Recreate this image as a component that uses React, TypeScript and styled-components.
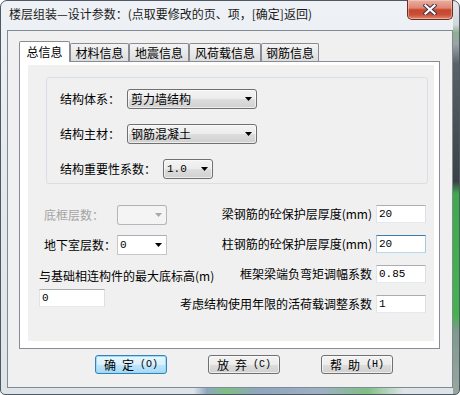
import React from "react";
import styled, { createGlobalStyle } from "styled-components";

const CJK = `"Noto Sans CJK SC", "Noto Sans", sans-serif`;
const MONO = `"Liberation Mono", "DejaVu Sans Mono", monospace`;

const GlobalStyle = createGlobalStyle`
  html, body { margin: 0; padding: 0; background: #ffffff; }
  body { width: 460px; height: 395px; overflow: hidden; font-family: ${CJK}; }
  #root { width: 460px; height: 395px; }
  *, *::before, *::after { box-sizing: border-box; }
`;

const Window = styled.div`
  width: 460px;
  height: 395px;
  display: flex;
  flex-direction: column;
  padding: 0 6px 6px;
  border: 1px solid #4f5963;
  border-radius: 7px 7px 5px 5px;
  background:
    linear-gradient(
        to bottom,
        #e4e8ec 0%,
        #d0d6da 6%,
        #8fb090 8%,
        #9ba3a6 11%,
        #5a6166 16%,
        #3b4246 46%,
        #3faa4c 49%,
        #46b24f 80%,
        #7f9a8c 84%,
        #9aa6a0 100%
      )
      right top / 6px 100% no-repeat,
    linear-gradient(
        to right,
        rgba(0, 0, 0, 0) 42%,
        #8fa6be 45%,
        #7fbf84 49%,
        #8fa6be 56%,
        #9fb0c2 70%,
        #7fbf84 80%,
        rgba(0, 0, 0, 0) 88%
      )
      left bottom / 100% 6px no-repeat,
    linear-gradient(to bottom, #eef2f6 0%, #e5eaef 40%, #dfe4e9 100%);
`;

const TitleBar = styled.div`
  height: 29px;
  flex-shrink: 0;
  display: flex;
  align-items: flex-start;
`;

const TitleText = styled.div`
  padding: 5px 0 0 2px;
  font: 12px/16px ${CJK};
  color: #1a1a1a;
  white-space: nowrap;
`;

const CloseButton = styled.div`
  margin: -1px 0 0 auto;
  width: 46px;
  height: 20px;
  border: 1px solid #6a2e22;
  border-top: none;
  border-radius: 0 0 5px 5px;
  background: linear-gradient(#eab0a2 0%, #df8672 42%, #c8452c 52%, #c9503a 78%, #e0896f 100%);
  box-shadow: inset 0 0 0 1px rgba(255, 220, 210, 0.45);
  display: flex;
  align-items: center;
  justify-content: center;
`;

const Client = styled.div`
  flex: 1;
  display: flex;
  flex-direction: column;
  border: 1px solid #7f8a95;
  background: #f0f0f0;
  padding: 10px 12px 13px 11px;
`;

const TabStrip = styled.div`
  height: 20px;
  flex-shrink: 0;
  display: flex;
  align-items: flex-end;
`;

const Tab = styled.div<{ $active?: boolean; $w: number }>`
  position: relative;
  z-index: ${(p) => (p.$active ? 1 : 0)};
  width: ${(p) => p.$w}px;
  height: ${(p) => (p.$active ? 21 : 18)}px;
  margin-bottom: ${(p) => (p.$active ? -1 : 0)}px;
  border: 1px solid #898c95;
  border-bottom: none;
  border-radius: 2px 2px 0 0;
  background: ${(p) =>
    p.$active ? "#ffffff" : "linear-gradient(#f4f4f4 0%, #e9e9e9 50%, #dcdcdc 100%)"};
  display: flex;
  align-items: center;
  justify-content: center;
  font: 12px/16px ${CJK};
  color: #000;
  white-space: nowrap;
`;

const TabPanel = styled.div`
  height: 288px;
  flex-shrink: 0;
  display: flex;
  border: 1px solid #898c95;
  background: #ffffff;
  padding: 3px 5px 7px 8px;
`;

const Page = styled.div`
  flex: 1;
  display: flex;
  flex-direction: column;
  background: #f0f0f0;
  padding-top: 12px;
`;

const GroupBox = styled.div`
  margin: 0 6px 0 18px;
  border: 1px solid #d5dfe5;
  border-radius: 3px;
  padding: 11px 0 4px 13px;
  display: flex;
  flex-direction: column;
  gap: 15px;
`;

const FieldRow = styled.div`
  height: 20px;
  display: flex;
  align-items: center;
  gap: 7px;
`;

const Label = styled.span<{ $disabled?: boolean }>`
  font: 12px/16px ${CJK};
  color: ${(p) => (p.$disabled ? "#a3a3a3" : "#000")};
  white-space: nowrap;
`;

const ThemedCombo = styled.div<{ $w: number }>`
  width: ${(p) => p.$w}px;
  height: 20px;
  flex-shrink: 0;
  border: 1px solid #707070;
  border-radius: 3px;
  background: linear-gradient(#f3f3f3 0%, #ececec 50%, #dddddd 52%, #d0d0d0 100%);
  box-shadow: inset 0 0 0 1px rgba(255, 255, 255, 0.6);
  display: flex;
  align-items: center;
  justify-content: space-between;
  padding: 0 4px 0 3px;
`;

const PlainCombo = styled.div<{ $disabled?: boolean }>`
  width: 50px;
  height: 20px;
  flex-shrink: 0;
  border: 1px solid ${(p) => (p.$disabled ? "#b4b8bc" : "#c3c6cb")};
  border-top-color: ${(p) => (p.$disabled ? "#adb2b5" : "#abadb3")};
  border-radius: ${(p) => (p.$disabled ? 3 : 1)}px;
  background: ${(p) => (p.$disabled ? "#f4f4f4" : "#ffffff")};
  display: flex;
  align-items: center;
  justify-content: space-between;
  padding: 0 4px 0 2px;
`;

const ComboText = styled.span<{ $mono?: boolean }>`
  font: ${(p) => (p.$mono ? `11px/16px ${MONO}` : `12px/16px ${CJK}`)};
  color: #000;
  white-space: nowrap;
`;

const Lower = styled.div`
  margin: 21px 8px 0 11px;
  display: grid;
  grid-template-columns: minmax(0, 1fr) auto;
  grid-template-rows: repeat(4, 20px);
  row-gap: 10px;
`;

const LeftRow = styled.div<{ $row: number }>`
  grid-column: 1;
  grid-row: ${(p) => p.$row};
  display: flex;
  align-items: center;
`;

const LeftLabel = styled(Label)`
  width: 78px;
  padding-left: 5px;
`;

const LeftBlock = styled.div`
  grid-column: 1;
  grid-row: 3 / span 2;
  display: flex;
  flex-direction: column;
  align-items: flex-start;
  gap: 5px;
  padding-top: 3px;
`;

const RightRow = styled.div<{ $row: number }>`
  grid-column: 2;
  grid-row: ${(p) => p.$row};
  justify-self: end;
  align-self: start;
  height: 18px;
  display: flex;
  align-items: center;
  gap: 4px;
`;

const TextInput = styled.div<{ $w: number; $focused?: boolean }>`
  width: ${(p) => p.$w}px;
  height: 18px;
  flex-shrink: 0;
  background: #ffffff;
  border: 1px solid;
  border-color: ${(p) =>
    p.$focused ? "#3d7bad #a4c9e3 #b7d9ed #a4c9e3" : "#abadb3 #dbdfe6 #e3e9ef #e2e3ea"};
  padding-left: 2px;
  display: flex;
  align-items: center;
  font: 11px/16px ${MONO};
  color: #000;
`;

const ButtonRow = styled.div`
  margin-top: 6px;
  padding-left: 76px;
  display: flex;
  gap: 41px;
`;

const Button = styled.div<{ $default?: boolean }>`
  width: 72px;
  height: 19px;
  border: 1px solid ${(p) => (p.$default ? "#3c7fb1" : "#707070")};
  border-radius: 3px;
  background: ${(p) =>
    p.$default
      ? "linear-gradient(#eaf6fd 0%, #d9f0fc 50%, #bee6fd 52%, #a7d9f5 100%)"
      : "linear-gradient(#f3f3f3 0%, #ececec 50%, #dddddd 52%, #d0d0d0 100%)"};
  box-shadow: inset 0 0 0 1px ${(p) => (p.$default ? "rgba(140, 220, 255, 0.9)" : "rgba(255,255,255,0.6)")};
  display: flex;
  align-items: center;
  justify-content: center;
  gap: 6px;
  font: 12px/16px ${CJK};
  color: #000;
  white-space: nowrap;
`;

const Mnemonic = styled.span`
  font: 10px/16px ${MONO};
`;

const Arrow: React.FC<{ color?: string }> = ({ color = "#000" }) => (
  <svg width="7" height="4" viewBox="0 0 7 4">
    <polygon points="0,0 7,0 3.5,4" fill={color} />
  </svg>
);

const CloseX = () => (
  <svg width="14" height="11" viewBox="0 0 14 11">
    <path d="M2.5 1.5 L11.5 9.5 M11.5 1.5 L2.5 9.5" stroke="#3b3548" strokeWidth="4.2" strokeLinecap="square" />
    <path d="M2.5 1.5 L11.5 9.5 M11.5 1.5 L2.5 9.5" stroke="#ffffff" strokeWidth="2.2" strokeLinecap="square" />
  </svg>
);

const tabs = [
  { label: "总信息", w: 51, active: true },
  { label: "材料信息", w: 59 },
  { label: "地震信息", w: 60 },
  { label: "风荷载信息", w: 72 },
  { label: "钢筋信息", w: 58 },
];

const rightFields = [
  { label: "梁钢筋的砼保护层厚度(mm)", value: "20" },
  { label: "柱钢筋的砼保护层厚度(mm)", value: "20", focused: true },
  { label: "框架梁端负弯矩调幅系数", value: "0.85" },
  { label: "考虑结构使用年限的活荷载调整系数", value: "1" },
];

const buttons = [
  { a: "确", b: "定", m: "(O)", def: true },
  { a: "放", b: "弃", m: "(C)" },
  { a: "帮", b: "助", m: "(H)" },
];

export default function App() {
  return (
    <>
      <GlobalStyle />
      <Window>
        <TitleBar>
          <TitleText>楼层组装—设计参数：(点取要修改的页、项，[确定]返回)</TitleText>
          <CloseButton>
            <CloseX />
          </CloseButton>
        </TitleBar>
        <Client>
          <TabStrip>
            {tabs.map((t) => (
              <Tab key={t.label} $w={t.w} $active={t.active}>
                {t.label}
              </Tab>
            ))}
          </TabStrip>
          <TabPanel>
            <Page>
              <GroupBox>
                <FieldRow>
                  <Label>结构体系：</Label>
                  <ThemedCombo $w={130}>
                    <ComboText>剪力墙结构</ComboText>
                    <Arrow />
                  </ThemedCombo>
                </FieldRow>
                <FieldRow>
                  <Label>结构主材：</Label>
                  <ThemedCombo $w={130}>
                    <ComboText>钢筋混凝土</ComboText>
                    <Arrow />
                  </ThemedCombo>
                </FieldRow>
                <FieldRow>
                  <Label>结构重要性系数：</Label>
                  <ThemedCombo $w={50}>
                    <ComboText $mono>1.0</ComboText>
                    <Arrow />
                  </ThemedCombo>
                </FieldRow>
              </GroupBox>
              <Lower>
                <LeftRow $row={1}>
                  <LeftLabel $disabled>底框层数：</LeftLabel>
                  <PlainCombo $disabled>
                    <ComboText $mono />
                    <Arrow color="#a8a8a8" />
                  </PlainCombo>
                </LeftRow>
                <LeftRow $row={2}>
                  <LeftLabel>地下室层数：</LeftLabel>
                  <PlainCombo>
                    <ComboText $mono>0</ComboText>
                    <Arrow />
                  </PlainCombo>
                </LeftRow>
                <LeftBlock>
                  <Label>与基础相连构件的最大底标高(m)</Label>
                  <TextInput $w={66}>0</TextInput>
                </LeftBlock>
                {rightFields.map((f, i) => (
                  <RightRow key={f.label} $row={i + 1}>
                    <Label>{f.label}</Label>
                    <TextInput $w={50} $focused={f.focused}>
                      {f.value}
                    </TextInput>
                  </RightRow>
                ))}
              </Lower>
            </Page>
          </TabPanel>
          <ButtonRow>
            {buttons.map((b) => (
              <Button key={b.m} $default={b.def}>
                <span>{b.a}</span>
                <span>{b.b}</span>
                <Mnemonic>{b.m}</Mnemonic>
              </Button>
            ))}
          </ButtonRow>
        </Client>
      </Window>
    </>
  );
}
